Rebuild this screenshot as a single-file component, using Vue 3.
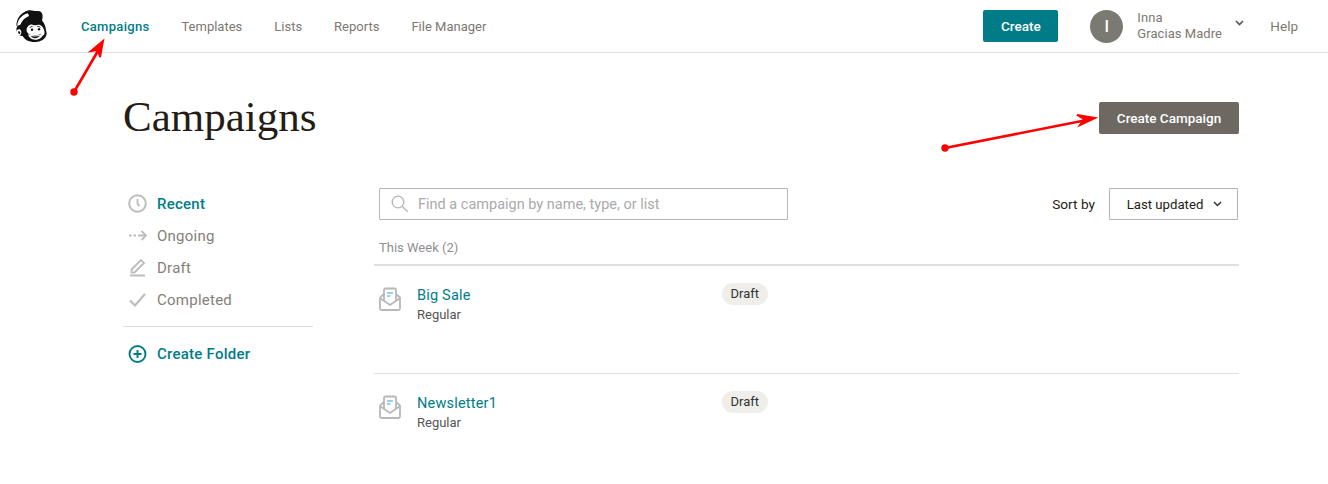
<script setup>
const nav = ['Templates', 'Lists', 'Reports', 'File Manager']
const filters = [
  { label: 'Recent', icon: 'clock', active: true },
  { label: 'Ongoing', icon: 'arrow' },
  { label: 'Draft', icon: 'pen' },
  { label: 'Completed', icon: 'check' }
]
const campaigns = [{ name: 'Big Sale' }, { name: 'Newsletter1' }]
</script>

<template>
  <div class="page">
    <header class="topbar">
      <svg class="logo" viewBox="0 0 34 34" width="34" height="34">
        <path fill="#111" d="M2.500 17C2 9 8 3 14 1.500c4-1 6 1 9 .5 3-.5 5 1 5.500 4 .3 2 0 3.500-.5 5.500 2.500 3 4 6.500 4 10 .8 2 1 4-.5 6.500-2.500 4-8 5.500-13 5-4.500-.5-8-2.500-10-6-2.500 0-5-1.500-5.800-4.500-.7-2.500 0-4.500.8-5.500z"/>
        <path fill="#fff" d="M3.300 17C3 11 8 6 13.500 4.300c.8.700 1.300 1.700 1.500 2.700-4 1.500-7 4.500-8.500 8.500-.8.500-2 1-3.200 1.500z"/>
        <path fill="#fff" d="M2.800 21.500c1.200-1.800 3.700-1.500 4.400.5.600 2-.4 4.500-1.900 4.500-2 0-3.700-3-2.500-5z"/>
        <path fill="#111" d="M4.200 22.500c.8-.6 1.800-.3 2 .8.200 1-.2 1.700-.7 1.700-.8 0-1.800-1.600-1.300-2.500z"/>
        <path fill="#fff" d="M12.500 21c.2-3 2.500-5.500 5-5.500 1.500 0 2.500 1 4 .8 1.500-.3 3-.8 4.500-.3 2.500 1 4.300 4 4.500 7 .2 1.500-.3 2.500-1 3.500-.5-1-2-1.500-3.500-1-3 1-7 1-9.500.2-2.500-.8-4-2.500-4-4.700z"/>
        <path fill="#111" d="M15.500 18.500c1.200-1.500 3-1.700 4.500-.8-1.500-.2-3 .2-4 1.200zM23 17.500c1.300-.7 3-.3 4 1-1.300-.5-2.800-.7-4-.4z"/>
        <circle cx="18" cy="20.800" r="1.200" fill="#111"/>
        <circle cx="25" cy="20.300" r="1.200" fill="#111"/>
        <path fill="#fff" d="M14 25.300c5 1.700 10.500 1.500 15.500-.8-.5 3.500-4.500 6.500-8.500 6.300-3.500-.2-6.300-2.500-7-5.500z"/>
        <path fill="#111" d="M16.500 27c3 .7 6.500.6 9.500-.4-1.200 1.700-3 2.600-5 2.600-1.800 0-3.500-1-4.500-2.200z"/>
      </svg>
      <nav class="nav">
        <a class="nav-link active">Campaigns</a>
        <a v-for="n in nav" :key="n" class="nav-link">{{ n }}</a>
      </nav>
      <button class="btn teal">Create</button>
      <div class="avatar">I</div>
      <div class="account">
        <div>Inna</div>
        <div>Gracias Madre</div>
      </div>
      <svg class="acct-chev" width="9" height="6" viewBox="0 0 9 6"><path d="M1 1l3.500 3.500L8 1" fill="none" stroke="#555" stroke-width="1.700"/></svg>
      <a class="help">Help</a>
    </header>

    <main class="main">
      <div class="title-row">
        <h1>Campaigns</h1>
        <button class="btn grey">Create Campaign</button>
      </div>

      <div class="columns">
        <aside class="side">
          <div v-for="f in filters" :key="f.label" class="filter" :class="{ on: f.active }">
            <svg class="ficon" width="20" height="20" viewBox="0 0 20 20" fill="none" stroke="#bcbcbc" stroke-width="1.500">
              <template v-if="f.icon === 'clock'">
                <circle cx="9.500" cy="9.500" r="8.300" stroke-width="2"/>
                <path d="M9.500 5v5l2 2" stroke-width="1.800"/>
              </template>
              <template v-else-if="f.icon === 'arrow'">
                <path d="M1 9.500h2.500M5.500 9.500h2.500M10 9.500h7.500" stroke-width="1.800"/>
                <path d="M13.500 5L18 9.500 13.500 14" stroke-width="1.800"/>
              </template>
              <template v-else-if="f.icon === 'pen'">
                <path d="M3.500 11.500L13 2l3 3-9.500 9.500H3.500z" stroke-width="1.800"/>
                <path d="M2 17.500h15" stroke-width="2"/>
              </template>
              <template v-else>
                <path d="M2 10.500l5 5L17 4" stroke-width="2.200"/>
              </template>
            </svg>
            <span>{{ f.label }}</span>
          </div>
          <div class="side-rule"></div>
          <div class="filter folder">
            <svg class="ficon" width="20" height="20" viewBox="0 0 20 20" fill="none" stroke="#007c89" stroke-width="1.900">
              <circle cx="9.500" cy="10" r="8"/>
              <path d="M9.500 6v8M5.500 10h8"/>
            </svg>
            <span>Create Folder</span>
          </div>
        </aside>

        <section class="content">
          <div class="tools">
            <div class="search">
              <svg width="18" height="18" viewBox="0 0 18 18" fill="none" stroke="#b4b4b4" stroke-width="1.300">
                <circle cx="7" cy="7" r="5.800"/>
                <path d="M11.200 11.200l5.500 5.500"/>
              </svg>
              <span>Find a campaign by name, type, or list</span>
            </div>
            <span class="sort-label">Sort by</span>
            <div class="select">
              <span>Last updated</span>
              <svg width="9" height="6" viewBox="0 0 9 6"><path d="M1 1l3.500 3.500L8 1" fill="none" stroke="#333" stroke-width="1.500"/></svg>
            </div>
          </div>
          <div class="week">This Week (2)</div>
          <div v-for="c in campaigns" :key="c.name" class="row">
            <svg class="mail" width="22" height="24" viewBox="0 0 22 24" fill="none" stroke="#b8b8b8" stroke-width="1.800">
              <path d="M1 10.500V21.500a1.500 1.500 0 0 0 1.500 1.500h17a1.500 1.500 0 0 0 1.500-1.500V10.500l-4-3.500"/>
              <path d="M1 10.500L5 7"/>
              <path d="M1.500 11.500L11 18l9.500-6.500"/>
              <path d="M5 14V3a1.500 1.500 0 0 1 1.500-1.500h9A1.500 1.500 0 0 1 17 3v11"/>
              <path d="M8 6h6" stroke="#8fcbe6"/>
              <path d="M8 9h3.500" stroke="#8fcbe6"/>
            </svg>
            <div class="row-text">
              <a class="row-name">{{ c.name }}</a>
              <div class="row-type">Regular</div>
            </div>
            <span class="badge">Draft</span>
          </div>
        </section>
      </div>
    </main>

    <svg class="notes" width="1328" height="484" viewBox="0 0 1328 484" fill="none">
      <g stroke="#f00" stroke-width="2">
        <path d="M74 92L102 44" stroke-width="2.600"/>
        <path d="M91 51L103 41L100 57L98 50z" fill="#f00"/>
        <path d="M945 148L1092 119" stroke-width="2.600"/>
        <path d="M1077 115L1095 118L1080 125L1084 119z" fill="#f00"/>
      </g>
      <circle cx="74" cy="92" r="3.700" fill="#f00"/>
      <circle cx="945" cy="148" r="3.700" fill="#f00"/>
    </svg>
  </div>
</template>

<style>
html, body { margin: 0; background: #fff; }
</style>

<style scoped>
.page {
  position: relative;
  width: 1328px;
  height: 484px;
  overflow: hidden;
  background: #fff;
  font-family: Roboto, "Liberation Sans", sans-serif;
  font-size: 14px;
  color: #241c15;
}
.topbar {
  display: flex;
  align-items: center;
  height: 52px;
  border-bottom: 1px solid #e0e0e0;
  padding-left: 14px;
  box-sizing: content-box;
}
.logo { flex: none; }
.nav {
  display: flex;
  gap: 32px;
  margin-left: 33px;
  flex: 1;
}
.nav-link { color: #7d7871; font-size: 13px; }
.nav-link.active { color: #007c89; font-weight: 500; letter-spacing: 0.3px; }
.btn {
  border: 0;
  border-radius: 2px;
  color: #fff;
  font-family: inherit;
  font-weight: 500;
  font-size: 13.500px;
}
.teal { background: #007c89; width: 75px; height: 32px; }
.avatar {
  width: 33px;
  height: 33px;
  border-radius: 50%;
  background: #7a7a73;
  color: #fff;
  margin-left: 32px;
  font-size: 16px;
  font-weight: 500;
  display: flex;
  align-items: center;
  justify-content: center;
}
.account {
  margin-left: 14px;
  color: #7d7871;
  font-size: 13px;
  line-height: 16px;
  width: 92px;
  letter-spacing: 0.05px;
}
.acct-chev { margin: -6px 0 0 6px; }
.help { margin: 0 30px 0 26px; color: #7d7871; font-size: 13.500px; }
.main { padding: 0 89px 0 123px; }
.title-row {
  display: flex;
  justify-content: space-between;
  align-items: center;
  height: 130px;
}
h1 {
  margin: -3px 0 0;
  font-family: "Liberation Serif", serif;
  font-weight: 400;
  font-size: 43px;
  color: #241c15;
}
.grey {
  background: #6e6862;
  width: 140px;
  height: 32px;
}
.columns { display: flex; }
.side { width: 190px; padding-top: 5px; flex: none; }
.filter {
  display: flex;
  align-items: center;
  height: 32px;
  gap: 9px;
  margin-left: 5px;
  color: #85807a;
  font-size: 15px;
  letter-spacing: 0.25px;
}
.filter.on { color: #007c89; font-weight: 500; }
.ficon { flex: none; }
.side-rule { border-top: 1px solid #ddd; margin: 10px 0 11px; }
.folder { color: #007c89; font-weight: 500; }
.content { flex: 1; margin-left: 61px; padding-top: 5px; }
.tools { display: flex; align-items: center; padding-left: 5px; }
.search {
  height: 30px;
  border: 1px solid #b5b5b5;
  border-radius: 1px;
  display: flex;
  align-items: center;
  gap: 9px;
  padding-left: 11px;
  box-sizing: content-box;
  margin-right: auto;
  width: 396px;
  color: #aaa;
  font-size: 14.500px;
}
.sort-label { margin-right: 14px; font-size: 13.700px; }
.select {
  width: 125px;
  height: 30px;
  padding-left: 2px;
  border: 1px solid #b5b5b5;
  border-radius: 1px;
  display: flex;
  align-items: center;
  justify-content: center;
  gap: 10px;
  font-size: 13.200px;
  margin-right: 1px;
}
.week {
  padding: 20px 0 8px 5px;
  line-height: 16px;
  color: #8f8f8f;
  font-size: 13px;
  border-bottom: 2px solid #e0e0e0;
}
.row {
  display: flex;
  align-items: flex-start;
  border-bottom: 1px solid #e0e0e0;
  padding: 21px 0 0 5px;
  height: 86px;
}
.row:last-child { border-bottom: 0; }
.mail { flex: none; margin-right: 16px; }
.row-text { width: 305px; }
.row-name { color: #007c89; font-size: 14.500px; letter-spacing: 0.2px; display: block; line-height: 18px; }
.row-type { font-size: 13px; color: #555; margin-top: 1px; line-height: 17px; }
.badge {
  margin-top: -4px;
  background: #efeeea;
  border-radius: 11px;
  padding: 0 8.500px;
  height: 22px;
  line-height: 21px;
  font-size: 13px;
  color: #333;
}
.notes { position: absolute; left: 0; top: 0; pointer-events: none; }
</style>
